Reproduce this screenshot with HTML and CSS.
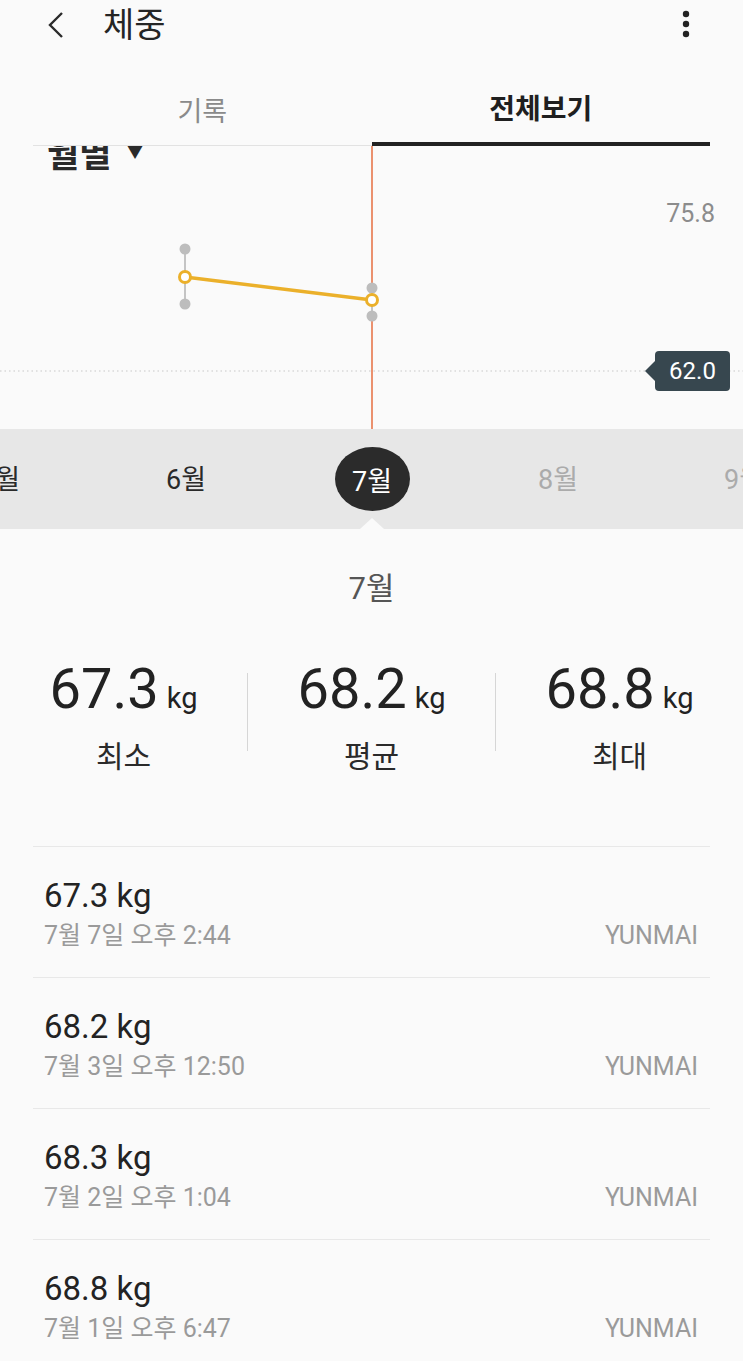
FILE: index.html
```html
<!DOCTYPE html>
<html>
<head>
    <meta charset="utf-8">
    <title>체중</title>
    <link rel="stylesheet" href="styles.css">
</head>
<body>
    <header class="appbar">
        <svg class="back" width="24" height="30" viewBox="0 0 24 30">
            <polyline points="18,3 6,15 18,27" fill="none" stroke="#2b2b2b" stroke-width="2.4"/>
        </svg>
        <h1 class="title">체중</h1>
        <svg class="more" width="10" height="30" viewBox="0 0 10 30">
            <circle cx="5" cy="4" r="3.2" fill="#222"/>
            <circle cx="5" cy="14" r="3.2" fill="#222"/>
            <circle cx="5" cy="24" r="3.2" fill="#222"/>
        </svg>
    </header>

    <nav class="tabs">
        <div class="tab">기록</div>
        <div class="tab active">전체보기</div>
    </nav>

    <section class="chart">
        <div class="period">월별 <span class="caret">▼</span></div>
        <svg class="plot" width="743" height="283" viewBox="0 0 743 283">
            <line x1="0" y1="225" x2="743" y2="225" stroke="#c8c8c8" stroke-width="1.2" stroke-dasharray="1.5 3"/>
            <line x1="372" y1="0" x2="372" y2="283" stroke="#e8774c" stroke-width="1.6"/>
            <line x1="185" y1="103" x2="185" y2="158" stroke="#c4c4c4" stroke-width="2"/>
            <line x1="372" y1="142" x2="372" y2="170" stroke="#c4c4c4" stroke-width="2"/>
            <circle cx="185" cy="103" r="5.5" fill="#bdbdbd"/>
            <circle cx="185" cy="158" r="5.5" fill="#bdbdbd"/>
            <circle cx="372" cy="142" r="5.5" fill="#bdbdbd"/>
            <circle cx="372" cy="170" r="5.5" fill="#bdbdbd"/>
            <line x1="185" y1="131" x2="372" y2="154" stroke="#ebb02a" stroke-width="3.5"/>
            <circle cx="185" cy="131" r="5.5" fill="#fff" stroke="#ebb02a" stroke-width="3"/>
            <circle cx="372" cy="154" r="5.5" fill="#fff" stroke="#ebb02a" stroke-width="3"/>
        </svg>
        <div class="axis-max">75.8</div>
        <div class="goal">62.0</div>
    </section>

    <div class="months">
        <div class="month-row">
            <div class="month">5월</div>
            <div class="month">6월</div>
            <div class="month current"><span>7월</span></div>
            <div class="month future">8월</div>
            <div class="month future">9월</div>
        </div>
        <div class="pointer"></div>
    </div>

    <div class="month-title">7월</div>

    <div class="stats">
        <div class="stat">
            <div class="value">67.3<small>kg</small></div>
            <div class="label">최소</div>
        </div>
        <div class="sep"></div>
        <div class="stat">
            <div class="value">68.2<small>kg</small></div>
            <div class="label">평균</div>
        </div>
        <div class="sep"></div>
        <div class="stat">
            <div class="value">68.8<small>kg</small></div>
            <div class="label">최대</div>
        </div>
    </div>

    <ul class="records">
        <li class="record">
            <div class="weight">67.3 kg</div>
            <div class="meta"><span>7월 7일 오후 2:44</span><span class="source">YUNMAI</span></div>
        </li>
        <li class="record">
            <div class="weight">68.2 kg</div>
            <div class="meta"><span>7월 3일 오후 12:50</span><span class="source">YUNMAI</span></div>
        </li>
        <li class="record">
            <div class="weight">68.3 kg</div>
            <div class="meta"><span>7월 2일 오후 1:04</span><span class="source">YUNMAI</span></div>
        </li>
        <li class="record">
            <div class="weight">68.8 kg</div>
            <div class="meta"><span>7월 1일 오후 6:47</span><span class="source">YUNMAI</span></div>
        </li>
    </ul>
</body>
</html>
```

FILE: styles.css
```css
body { margin: 0; background: #fafafa; color: #242424; font-family: Roboto, "Noto Sans CJK KR", sans-serif; overflow: hidden; }

.appbar { height: 50px; display: flex; align-items: center; padding: 0 52px 0 44px; }
.back { flex: none; }
.title { margin: 0 0 0 35px; flex: 1; font-size: 34px; font-weight: 400; line-height: 50px; color: #252525; }
.more { flex: none; }

.tabs { display: flex; margin: 0 33px; height: 96px; position: relative; z-index: 2; background: #fafafa; }
.tab { flex: 1; display: flex; align-items: center; justify-content: center; padding-top: 24px; font-size: 27px; color: #8a8a8a; border-bottom: 1px solid #e2e2e2; }
.tab.active { color: #1f1f1f; font-weight: 700; font-size: 28px; border-bottom: 4px solid #222; padding-top: 21px; }

.chart { position: relative; height: 283px; overflow: hidden; }
.period { margin: -19px 0 0 47px; font-size: 35px; font-weight: 700; line-height: 42px; color: #2a2a2a; position: relative; z-index: 1; }
.caret { font-size: 26px; vertical-align: 10px; margin-left: 2px; }
.plot { position: absolute; left: 0; top: 0; }
.axis-max { position: absolute; right: 28px; top: 53px; font-size: 25px; color: #8c8c8c; }
.goal { position: absolute; left: 655px; top: 205px; width: 75px; height: 40px; line-height: 40px; text-align: center; background: #37474f; color: #fff; font-size: 24px; border-radius: 4px; }
.goal::before { content: ""; position: absolute; left: -10px; top: 10px; border-style: solid; border-width: 10px 10px 10px 0; border-color: transparent #37474f transparent transparent; }

.months { position: relative; height: 100px; background: #e7e7e7; overflow: hidden; }
.month-row { display: flex; margin-left: -93px; height: 96px; }
.month { flex: none; width: 186px; display: flex; align-items: center; justify-content: center; font-size: 27px; color: #2a2a2a; }
.month.future { color: #ababab; }
.month.current span { display: flex; align-items: center; justify-content: center; width: 75px; height: 64px; border-radius: 50%; background: #2b2b2b; color: #fff; margin-top: 4px; }
.pointer { position: absolute; left: 360px; bottom: 0; border-style: solid; border-width: 0 12px 11px 12px; border-color: transparent transparent #fafafa transparent; }

.month-title { margin-top: 42px; text-align: center; font-size: 31px; line-height: 36px; color: #555; }

.stats { display: flex; margin-top: 50px; padding-bottom: 71px; }
.stat { flex: 1; text-align: center; }
.value { font-size: 56px; line-height: 64px; color: #222; }
.value small { font-size: 29px; margin-left: 8px; }
.label { margin-top: 9px; font-size: 30px; line-height: 36px; color: #2a2a2a; }
.sep { width: 1px; height: 78px; margin-top: 16px; background: #d6d6d6; }

.records { list-style: none; margin: 0 33px; padding: 0; }
.record { border-top: 1px solid #e8e8e8; padding: 29px 12px 26px 11px; }
.weight { font-size: 33px; line-height: 40px; color: #232323; }
.meta { display: flex; justify-content: space-between; margin-top: 5px; font-size: 25px; line-height: 30px; color: #9a9a9a; }
.source { font-size: 25px; }
```
